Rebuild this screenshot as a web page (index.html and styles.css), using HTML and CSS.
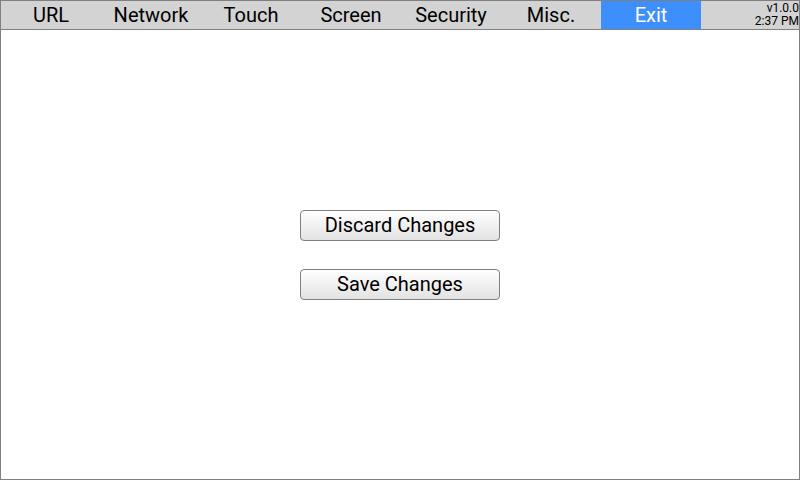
FILE: index.html
```html
<!DOCTYPE html>
<html>
<head>
<meta charset="utf-8">
<link rel="stylesheet" href="styles.css">
</head>
<body>
<div class="frame">
  <div class="topbar">
    <div class="tab">URL</div>
    <div class="tab">Network</div>
    <div class="tab">Touch</div>
    <div class="tab">Screen</div>
    <div class="tab">Security</div>
    <div class="tab">Misc.</div>
    <div class="tab active">Exit</div>
    <div class="info">
      <div>v1.0.0</div>
      <div>2:37 PM</div>
    </div>
  </div>
  <div class="content">
    <button class="btn">Discard Changes</button>
    <button class="btn">Save Changes</button>
  </div>
</div>
</body>
</html>
```
FILE: styles.css
```css
html, body {
  margin: 0;
  padding: 0;
  background: #ffffff;
}
.frame {
  width: 800px;
  height: 480px;
  box-sizing: border-box;
  border: 1px solid #808080;
  display: flex;
  flex-direction: column;
  font-family: Roboto, "Liberation Sans", sans-serif;
  color: #000;
}
.topbar {
  height: 28px;
  background: #d3d3d3;
  border-bottom: 1px solid #808080;
  display: flex;
}
.tab {
  width: 100px;
  display: flex;
  align-items: center;
  justify-content: center;
  font-size: 20px;
}
.tab.active {
  background: #3d8ffd;
  color: #ffffff;
}
.info {
  flex: 1;
  display: flex;
  flex-direction: column;
  align-items: flex-end;
  justify-content: center;
  font-size: 12px;
  line-height: 13px;
  padding-right: 0;
}
.content {
  flex: 1;
  display: flex;
  flex-direction: column;
  align-items: center;
  justify-content: center;
  gap: 28px;
}
.btn {
  width: 200px;
  height: 31px;
  box-sizing: border-box;
  border: 1px solid #808080;
  border-radius: 4px;
  background: linear-gradient(#ffffff, #e2e2e2);
  font-family: Roboto, "Liberation Sans", sans-serif;
  font-size: 20px;
  color: #000;
  padding: 0;
}
```
